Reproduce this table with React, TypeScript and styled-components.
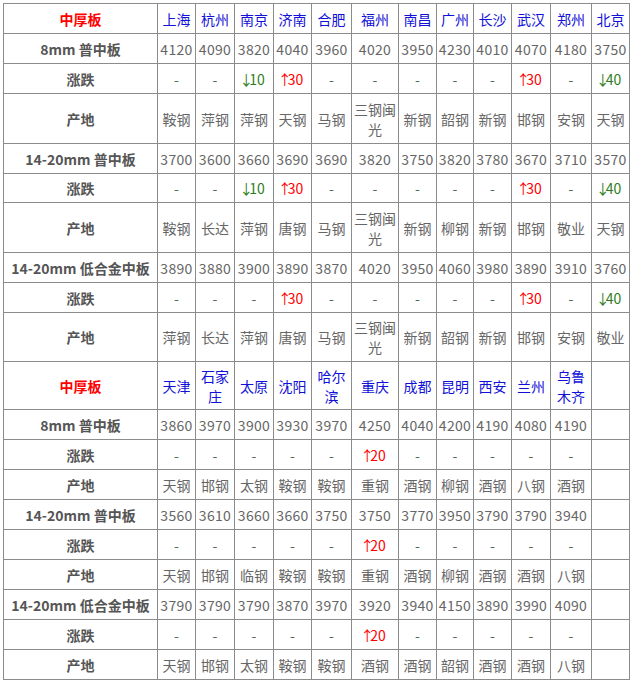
import React from "react";
import styled, { createGlobalStyle } from "styled-components";

const Global = createGlobalStyle`
  html, body { margin: 0; padding: 0; background: #fff; }
  body { font-family: "Microsoft YaHei", "Noto Sans CJK SC", "Noto Sans", sans-serif; }
`;

const COLS = "154px 38px 39px 39px 38px 40px 47px 38px 37px 38px 39px 41px 38px";
const LINE = "#8c8c8c";

const Page = styled.div`
  padding: 3px 0 0 3px;
`;

const Table = styled.div`
  display: inline-flex;
  flex-direction: column;
  border-left: 1px solid ${LINE};
  border-top: 1px solid ${LINE};
`;

const Row = styled.div<{ $h: number }>`
  display: grid;
  grid-template-columns: ${COLS};
  height: ${(p) => p.$h}px;
`;

const Cell = styled.div`
  display: flex;
  align-items: center;
  justify-content: center;
  text-align: center;
  border-right: 1px solid ${LINE};
  border-bottom: 1px solid ${LINE};
  font-size: 14px;
  line-height: 20px;
  white-space: pre-line;
  color: #666;
  overflow: hidden;
`;

const Label = styled(Cell)`
  font-weight: bold;
  color: #555;
`;

const Head = styled(Cell)`
  font-weight: bold;
  color: #f00;
`;

const City = styled(Cell)`
  color: #1010d8;
`;

const Num = styled(Cell)`
  color: #666;
  letter-spacing: 0.3px;
`;

const Change = styled(Cell)<{ $dir: "up" | "down" | "flat" }>`
  color: ${(p) => (p.$dir === "up" ? "#f00" : p.$dir === "down" ? "#2e7d1a" : "#4f6b4f")};
`;

const Arrow = styled.span`
  margin-left: -4px;
  letter-spacing: -4px;
`;

type Product = {
  name: string;
  prices: string[];
  changes: string[];
  places: string[];
  heights: [number, number, number];
};

type Section = {
  cities: string[];
  products: Product[];
  headH: number;
};

const sections: Section[] = [
  {
    headH: 30,
    cities: ["上海", "杭州", "南京", "济南", "合肥", "福州", "南昌", "广州", "长沙", "武汉", "郑州", "北京"],
    products: [
      {
        name: "8mm 普中板",
        prices: ["4120", "4090", "3820", "4040", "3960", "4020", "3950", "4230", "4010", "4070", "4180", "3750"],
        changes: ["-", "-", "↓10", "↑30", "-", "-", "-", "-", "-", "↑30", "-", "↓40"],
        places: ["鞍钢", "萍钢", "萍钢", "天钢", "马钢", "三钢闽\n光", "新钢", "韶钢", "新钢", "邯钢", "安钢", "天钢"],
        heights: [30, 30, 50],
      },
      {
        name: "14-20mm 普中板",
        prices: ["3700", "3600", "3660", "3690", "3690", "3820", "3750", "3820", "3780", "3670", "3710", "3570"],
        changes: ["-", "-", "↓10", "↑30", "-", "-", "-", "-", "-", "↑30", "-", "↓40"],
        places: ["鞍钢", "长达", "萍钢", "唐钢", "马钢", "三钢闽\n光", "新钢", "柳钢", "新钢", "邯钢", "敬业", "天钢"],
        heights: [30, 29, 50],
      },
      {
        name: "14-20mm 低合金中板",
        prices: ["3890", "3880", "3900", "3890", "3870", "4020", "3950", "4060", "3980", "3890", "3910", "3760"],
        changes: ["-", "-", "-", "↑30", "-", "-", "-", "-", "-", "↑30", "-", "↓40"],
        places: ["萍钢", "长达", "萍钢", "唐钢", "马钢", "三钢闽\n光", "新钢", "韶钢", "新钢", "邯钢", "安钢", "敬业"],
        heights: [30, 30, 49],
      },
    ],
  },
  {
    headH: 48,
    cities: ["天津", "石家\n庄", "太原", "沈阳", "哈尔\n滨", "重庆", "成都", "昆明", "西安", "兰州", "乌鲁\n木齐", ""],
    products: [
      {
        name: "8mm 普中板",
        prices: ["3860", "3970", "3900", "3930", "3970", "4250", "4040", "4200", "4190", "4080", "4190", ""],
        changes: ["-", "-", "-", "-", "-", "↑20", "-", "-", "-", "-", "-", ""],
        places: ["天钢", "邯钢", "太钢", "鞍钢", "鞍钢", "重钢", "酒钢", "柳钢", "酒钢", "八钢", "酒钢", ""],
        heights: [30, 30, 30],
      },
      {
        name: "14-20mm 普中板",
        prices: ["3560", "3610", "3660", "3660", "3750", "3750", "3770", "3950", "3790", "3790", "3940", ""],
        changes: ["-", "-", "-", "-", "-", "↑20", "-", "-", "-", "-", "-", ""],
        places: ["天钢", "邯钢", "临钢", "鞍钢", "鞍钢", "重钢", "酒钢", "柳钢", "酒钢", "酒钢", "八钢", ""],
        heights: [30, 30, 30],
      },
      {
        name: "14-20mm 低合金中板",
        prices: ["3790", "3790", "3790", "3870", "3970", "3920", "3940", "4150", "3890", "3990", "4090", ""],
        changes: ["-", "-", "-", "-", "-", "↑20", "-", "-", "-", "-", "-", ""],
        places: ["天钢", "邯钢", "太钢", "鞍钢", "鞍钢", "酒钢", "酒钢", "韶钢", "酒钢", "酒钢", "八钢", ""],
        heights: [30, 30, 30],
      },
    ],
  },
];

const dirOf = (v: string): "up" | "down" | "flat" =>
  v.startsWith("↑") ? "up" : v.startsWith("↓") ? "down" : "flat";

function ChangeValue({ v }: { v: string }) {
  const d = dirOf(v);
  if (d === "flat") return <>{v}</>;
  return (
    <span>
      <Arrow>{v[0]}</Arrow>
      {v.slice(1)}
    </span>
  );
}

export default function App() {
  return (
    <Page>
      <Global />
      <Table>
        {sections.map((s, si) => (
          <React.Fragment key={si}>
            <Row $h={s.headH}>
              <Head>中厚板</Head>
              {s.cities.map((c, i) => (
                <City key={i}>{c}</City>
              ))}
            </Row>
            {s.products.map((p, pi) => (
              <React.Fragment key={pi}>
                <Row $h={p.heights[0]}>
                  <Label>{p.name}</Label>
                  {p.prices.map((v, i) => (
                    <Num key={i}>{v}</Num>
                  ))}
                </Row>
                <Row $h={p.heights[1]}>
                  <Label>涨跌</Label>
                  {p.changes.map((v, i) => (
                    <Change key={i} $dir={dirOf(v)}>
                      <ChangeValue v={v} />
                    </Change>
                  ))}
                </Row>
                <Row $h={p.heights[2]}>
                  <Label>产地</Label>
                  {p.places.map((v, i) => (
                    <Cell key={i}>{v}</Cell>
                  ))}
                </Row>
              </React.Fragment>
            ))}
          </React.Fragment>
        ))}
      </Table>
    </Page>
  );
}
